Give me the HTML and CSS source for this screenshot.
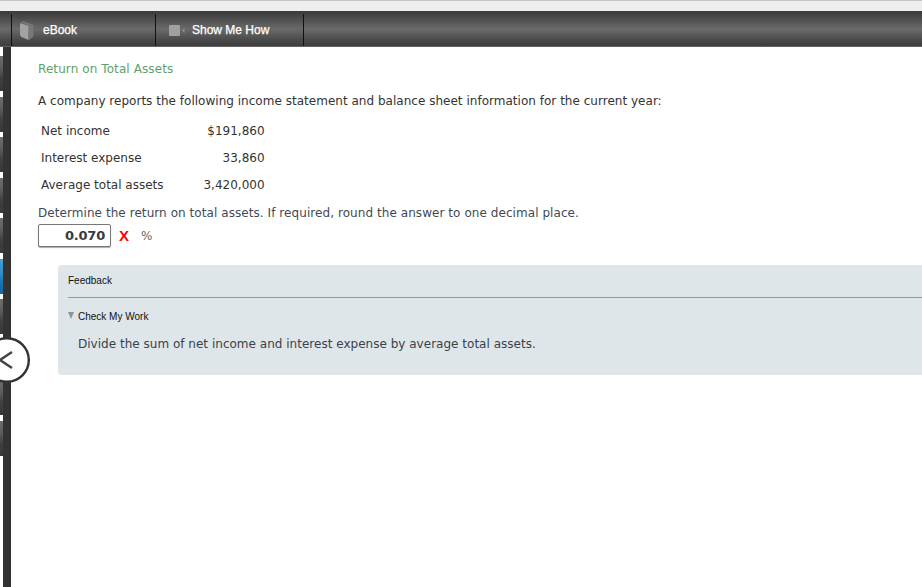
FILE: index.html
```html
<!DOCTYPE html>
<html lang="en">
<head>
<meta charset="utf-8">
<title>Return on Total Assets</title>
<link rel="stylesheet" href="styles.css">
</head>
<body>
<div class="browser-strip"></div>
<header class="toolbar">
  <a class="tool tool-ebook">
    <svg class="icon-book" width="14" height="19" viewBox="0 0 14 19"><path d="M3 0 13.500 4V15.500L9 19V5L1 1.500Z" fill="#777"/><path d="M0 2 8.500 5V19L1.500 16 0 14Z" fill="#a2a2a2"/></svg>
    <span>eBook</span>
  </a>
  <a class="tool tool-video">
    <svg class="icon-video" width="16" height="11" viewBox="0 0 16 11"><rect width="11" height="11" rx="1" fill="#a0a0a0"/><path d="M13 5.500 15.500 2.500V8.500Z" fill="#8a8a8a"/></svg>
    <span>Show Me How</span>
  </a>
</header>
<div class="workspace">
  <aside class="rail">
    <div class="tabs">
      <i class="tab"></i><i class="tab"></i><i class="tab"></i><i class="tab"></i><i class="tab"></i>
      <i class="tab active"></i>
      <i class="tab"></i><i class="tab"></i><i class="tab"></i><i class="tab"></i>
    </div>
    <div class="rail-bar"></div>
    <button class="collapse" aria-label="Collapse">
      <svg width="46" height="46" viewBox="0 0 46 46"><circle cx="23" cy="23" r="21.800" fill="#fff" stroke="#333" stroke-width="2.400"/><path d="M28 15 16 23 28 31" fill="none" stroke="#444" stroke-width="2.500"/></svg>
    </button>
  </aside>
  <main class="content">
    <h1 class="title">Return on Total Assets</h1>
    <p class="intro">A company reports the following income statement and balance sheet information for the current year:</p>
    <table class="data">
      <tr><td>Net income</td><td class="num">$191,860</td></tr>
      <tr><td>Interest expense</td><td class="num">33,860</td></tr>
      <tr><td>Average total assets</td><td class="num">3,420,000</td></tr>
    </table>
    <p class="question">Determine the return on total assets. If required, round the answer to one decimal place.</p>
    <div class="answer">
      <span class="field">0.070</span>
      <span class="wrong">X</span>
      <span class="unit">%</span>
    </div>
    <section class="feedback">
      <div class="fb-head">Feedback</div>
      <div class="fb-check"><i class="tri"></i>Check My Work</div>
      <p class="fb-text">Divide the sum of net income and interest expense by average total assets.</p>
    </section>
  </main>
</div>
</body>
</html>
```
FILE: styles.css
```css
* { box-sizing: border-box; }
html, body { margin: 0; height: 100%; overflow: hidden; background: #fff; }
body { width: 922px; height: 587px; font-family: "DejaVu Sans", Verdana, sans-serif; font-size: 12px; color: #333; }

.browser-strip { height: 11px; background: #eeeeee; border-top: 1px solid #c6c6c6; }

.toolbar {
  height: 36px;
  display: flex;
  padding-top: 3px;
  padding-left: 11px;
  background: linear-gradient(#3a3a3a 0, #474747 15%, #6a6a6a 50%, #4a4a4a 80%, #3e3e3e 96%, #777 100%);
  font-family: "Liberation Sans", Arial, sans-serif;
}
.tool {
  height: 32px;
  display: flex;
  align-items: center;
  color: #fff;
  font-size: 12px;
  font-weight: 400;
  border-left: 1px solid #111;
}
.tool-ebook { width: 144px; padding-left: 8px; gap: 9px; }
.tool-video { width: 149px; padding-left: 13px; gap: 7px; border-right: 1px solid #111; }
.icon-book, .icon-video { flex: none; }
.tool span { -webkit-text-stroke: 0.25px #fff; }

.workspace { display: flex; height: 540px; }

.rail { position: relative; flex: none; width: 11px; display: flex; }
.tabs {
  width: 3px;
  padding-top: 9px;
  display: flex;
  flex-direction: column;
  gap: 5.500px;
}
.tab { display: block; height: 35px; background: linear-gradient(#6e6e6e 0, #5c5c5c 35%, #3f3f3f 65%, #383838 100%); }
.tab.active { background: linear-gradient(#3ea0dc 0, #2e8fcf 40%, #1272b4 70%, #0f6aa8 100%); }
.rail-bar { width: 8px; background: #333; }
.collapse {
  position: absolute;
  left: -16px;
  top: 290px;
  width: 46px;
  height: 46px;
  padding: 0;
  border: 0;
  background: none;
}
.collapse svg { display: block; }

.content { flex: 1; min-width: 0; padding: 15px 0 0 27px; }
.title { margin: 0; font-size: 12px; font-weight: 400; line-height: 15px; color: #5fa06a; letter-spacing: 0.09px; }
.intro { margin: 17px 0 0; line-height: 15px; letter-spacing: 0.02px; }

.data { margin: 8px 0 0 0; border-collapse: separate; border-spacing: 0; }
.data td { height: 27px; padding: 0 0 0 3px; white-space: nowrap; }
.data td:first-child { width: 125px; }
.data .num { width: 101px; padding: 0; text-align: right; }

.question { margin: 8px 0 0; line-height: 15px; color: #3f4a55; letter-spacing: 0.065px; }

.answer { display: flex; align-items: center; height: 23px; margin-top: 3px; }
.field {
  width: 73px;
  height: 23px;
  padding-right: 5px;
  line-height: 21px;
  text-align: right;
  font-weight: 700;
  font-size: 13px;
  letter-spacing: -0.2px;
  color: #3a3a3a;
  background: #fff;
  border: 1px solid #777;
  border-radius: 2px;
  box-shadow: 0 1px 1px #aaa;
}
.wrong { margin-left: 8px; color: #f00; font: 700 15px "Liberation Sans", Arial, sans-serif; }
.unit { margin-left: 12px; color: #666; }

.feedback {
  margin: 18px 0 0 20px;
  height: 110px;
  padding: 0 0 0 10px;
  background: #dfe6e9;
  border-radius: 4px 0 0 4px;
  font-family: "Liberation Sans", Arial, sans-serif;
}
.fb-head { height: 33px; padding-top: 10px; font-size: 10px; line-height: 12px; color: #111; border-bottom: 1px solid #949a9c; }
.fb-check { display: flex; align-items: center; margin-top: 12px; height: 12px; font-size: 10px; color: #111; }
.tri { width: 0; height: 0; margin-right: 4px; margin-top: -2px; border: 3.500px solid transparent; border-bottom: 0; border-top: 7px solid #8f9496; }
.fb-text { margin: 15px 0 0 10px; font-family: "DejaVu Sans", Verdana, sans-serif; font-size: 12px; line-height: 15px; color: #39424a; letter-spacing: 0.015px; }
```
